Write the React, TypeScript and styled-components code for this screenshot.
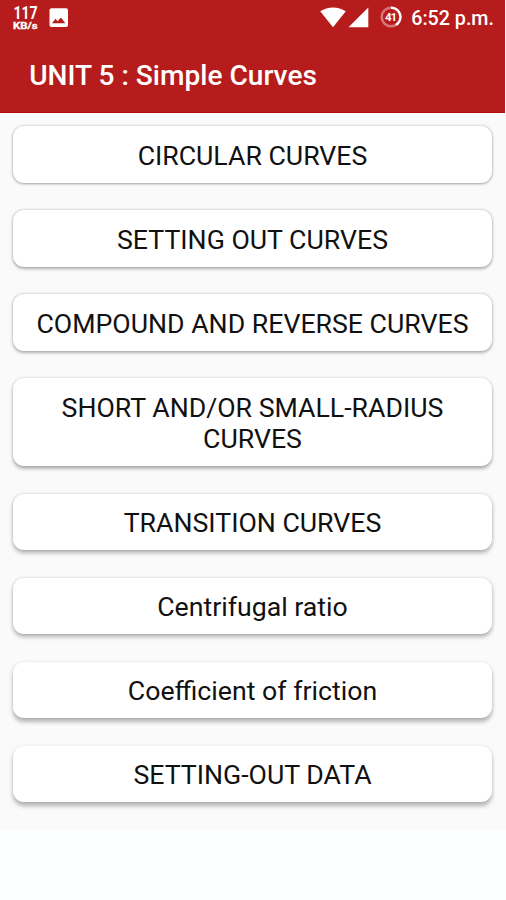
import React from "react";
import styled, { createGlobalStyle } from "styled-components";

const GlobalStyle = createGlobalStyle`
  * { box-sizing: border-box; }
  html, body { margin: 0; padding: 0; background: #fbffff; }
  body { font-family: Roboto, sans-serif; overflow: hidden; }
`;

const Screen = styled.div`
  width: 506px;
  height: 900px;
  display: flex;
  flex-direction: column;
  background: #fbffff;
`;

const Header = styled.header`
  width: 505px;
  height: 113px;
  flex: none;
  display: flex;
  flex-direction: column;
  background: #b71c1c;
  border-bottom: 1px solid #b00c0c;
  color: #fff;
`;

const StatusBar = styled.div`
  height: 37px;
  display: flex;
  align-items: flex-start;
  justify-content: space-between;
  padding: 0 11px 0 12px;
`;

const StatusGroup = styled.div`
  display: flex;
  align-items: flex-start;
`;

const NetSpeed = styled.div`
  width: 26px;
  padding-top: 4px;
  display: flex;
  flex-direction: column;
  align-items: center;
  font-weight: 700;
`;

const SpeedValue = styled.span`
  font-size: 18px;
  line-height: 17px;
  transform: scaleX(0.78);
`;

const SpeedUnit = styled.span`
  font-size: 9.5px;
  line-height: 10px;
  -webkit-text-stroke: 0.3px #fff;
  transform: scaleX(1.2);
`;

const Icon = styled.svg<{ $top: number; $left: number }>`
  display: block;
  flex: none;
  margin: ${(p) => p.$top}px 0 0 ${(p) => p.$left}px;
`;

const Clock = styled.span`
  margin: 7px 0 0 9px;
  font-size: 19.7px;
  line-height: 24px;
  font-weight: 500;
  white-space: nowrap;
`;

const Title = styled.h1`
  margin: 0;
  padding: 21px 0 0 29.2px;
  font-size: 28.1px;
  line-height: 35px;
  font-weight: 500;
  white-space: nowrap;
`;

const List = styled.main`
  height: 717px;
  flex: none;
  display: flex;
  flex-direction: column;
  gap: 27.5px;
  padding: 13.4px 14px 0 13px;
  background: #fafafa;
`;

const Card = styled.button<{ $depth: number }>`
  flex: none;
  width: 479px;
  border: 0;
  margin: 0;
  padding: 14.5px 18px 10.5px;
  border-radius: 11px;
  background: #fff;
  color: #111;
  font-family: Roboto, sans-serif;
  font-size: 26.7px;
  line-height: 31.5px;
  text-align: center;
  box-shadow:
    0 ${(p) => 1 + p.$depth * 0.35}px ${(p) => 3 + p.$depth * 0.25}px rgba(0, 0, 0, 0.28),
    0 0 3px rgba(0, 0, 0, ${(p) => 0.2 - p.$depth * 0.02});
`;

const topics = [
  "CIRCULAR CURVES",
  "SETTING OUT CURVES",
  "COMPOUND AND REVERSE CURVES",
  "SHORT AND/OR SMALL-RADIUS CURVES",
  "TRANSITION CURVES",
  "Centrifugal ratio",
  "Coefficient of friction",
  "SETTING-OUT DATA",
];

const PictureIcon = () => (
  <Icon $top={8} $left={11} width="20" height="20" viewBox="0 0 20 20">
    <rect x="0.5" y="0.3" width="18.5" height="18.7" rx="2" fill="#fff" />
    <path d="M3 15.2L6.5 10.8L8.5 13.3L12 9.5L16.3 15.2Z" fill="#b71c1c" />
  </Icon>
);

const WifiIcon = () => (
  <Icon $top={7} $left={0} width="26" height="21" viewBox="0 0 26 21">
    <path d="M0.2 4.2Q6 0.4 13 0.4T25.8 4.2L13 20.3Z" fill="#fff" />
  </Icon>
);

const SignalIcon = () => (
  <Icon $top={7} $left={2} width="21" height="21" viewBox="0 0 21 21">
    <path d="M20.3 0.5V20.3H0.5Z" fill="#fff" />
  </Icon>
);

const BatteryIcon = () => (
  <Icon $top={6} $left={11} width="22" height="22" viewBox="0 0 22 22">
    <circle cx="11" cy="11" r="9.3" fill="none" stroke="#d97878" strokeWidth="2.4" />
    <path d="M11 1.7A9.3 9.3 0 0 1 16 18.9" fill="none" stroke="#fff" strokeWidth="2.4" />
    <text x="10.4" y="15.2" textAnchor="middle" fontSize="11.5" fontWeight="700" letterSpacing="-1.2" fill="#fff">
      41
    </text>
  </Icon>
);

export default function App() {
  return (
    <>
      <GlobalStyle />
      <Screen>
        <Header>
          <StatusBar>
            <StatusGroup>
              <NetSpeed>
                <SpeedValue>117</SpeedValue>
                <SpeedUnit>KB/s</SpeedUnit>
              </NetSpeed>
              <PictureIcon />
            </StatusGroup>
            <StatusGroup>
              <WifiIcon />
              <SignalIcon />
              <BatteryIcon />
              <Clock>6:52 p.m.</Clock>
            </StatusGroup>
          </StatusBar>
          <Title>UNIT 5 : Simple Curves</Title>
        </Header>
        <List>
          {topics.map((topic, index) => (
            <Card key={topic} $depth={index}>
              {topic}
            </Card>
          ))}
        </List>
      </Screen>
    </>
  );
}
